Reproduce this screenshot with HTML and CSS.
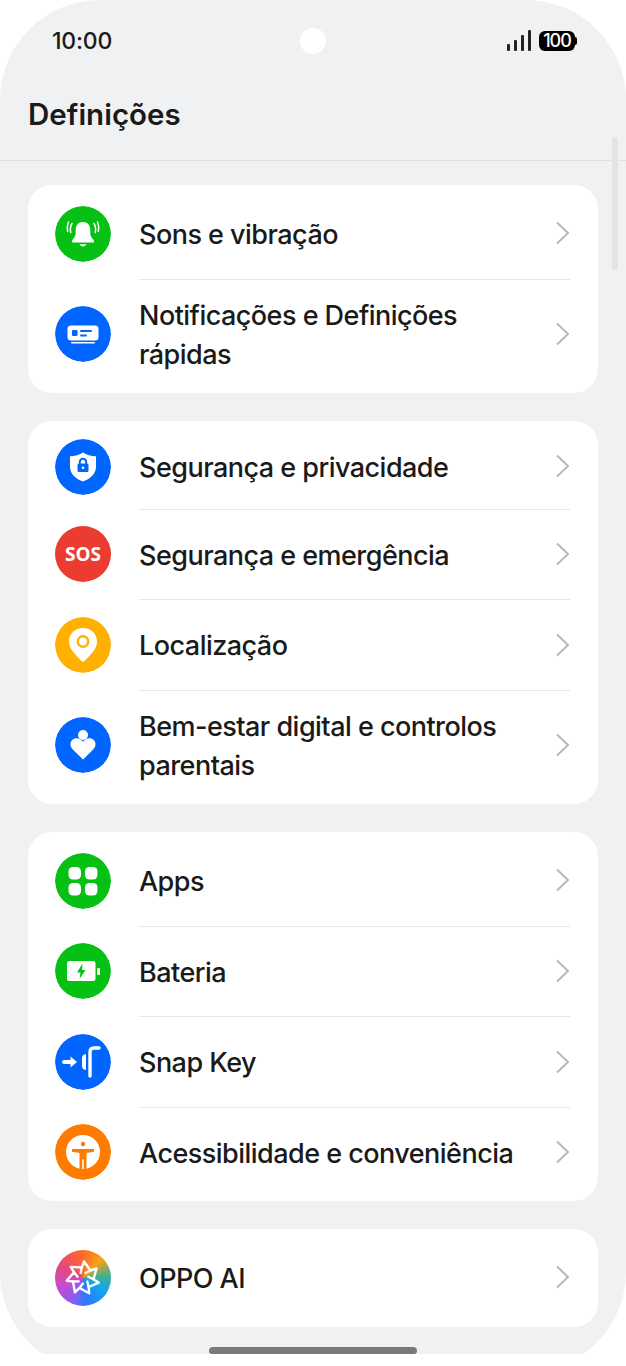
FILE: index.html
```html
<!DOCTYPE html>
<html lang="pt">
<head>
    <title>Definições</title>
    <link rel="stylesheet" href="styles.css">
</head>
<body>
    <div class="viewport">
        <div class="screen">
            <div class="status-bar">
                <span class="clock">10:00</span>
                <span class="camera"></span>
                <div class="status-icons">
                    <svg class="signal" width="24" height="22" viewBox="0 0 24 22">
                        <rect x="0" y="14" width="3" height="7" rx="1"/>
                        <rect x="7" y="10" width="3" height="11" rx="1"/>
                        <rect x="14" y="5" width="3" height="16" rx="1"/>
                        <rect x="21" y="0" width="3" height="21" rx="1"/>
                    </svg>
                    <div class="battery"><span class="battery-level">100</span></div>
                </div>
            </div>

            <div class="title-bar">
                <h1>Definições</h1>
            </div>

            <div class="scroll-thumb"></div>

            <div class="content">
                <div class="card">
                    <div class="row">
                        <svg class="icon" viewBox="0 0 56 56">
                            <circle cx="28" cy="28" r="28" fill="#07c014"/>
                            <path d="M28 16c-4.700 0-7.300 3.500-7.300 8v3.500c0 2.500-1.300 4.300-3.500 6.500v2.500h21.600V34c-2.200-2.200-3.500-4-3.500-6.500V24c0-4.500-2.600-8-7.300-8z" fill="#fff"/>
                            <path d="M24.500 38.300h7c-.8 1.500-2 2.100-3.500 2.100s-2.700-.6-3.500-2.100z" fill="#fff"/>
                            <path d="M17 17.500c-1.500 2.500-2 6-1.200 9M13.500 16c-1.300 3-1.600 6.500-.8 9.500M39 17.500c1.500 2.500 2 6 1.200 9M42.500 16c1.300 3 1.600 6.500.8 9.500" fill="none" stroke="#fff" stroke-width="1.500" stroke-linecap="round"/>
                        </svg>
                        <div class="row-body">
                            <span class="label">Sons e vibração</span>
                            <svg class="chevron" viewBox="0 0 15 24"><path d="M2 1.500 13 12 2 22.500"/></svg>
                        </div>
                    </div>
                    <div class="row row-tall">
                        <svg class="icon" viewBox="0 0 56 56">
                            <circle cx="28" cy="28" r="28" fill="#0066ff"/>
                            <rect x="12.500" y="19.500" width="31" height="15" rx="3.500" fill="#fff"/>
                            <rect x="17" y="24" width="5.500" height="6" rx="1" fill="#0066ff"/>
                            <rect x="25" y="24" width="12" height="2" rx="1" fill="#0066ff"/>
                            <rect x="25" y="28.500" width="7" height="2" rx="1" fill="#0066ff"/>
                            <rect x="16" y="36" width="24" height="1.600" rx=".8" fill="#fff"/>
                        </svg>
                        <div class="row-body">
                            <span class="label">Notificações e Definições rápidas</span>
                            <svg class="chevron" viewBox="0 0 15 24"><path d="M2 1.500 13 12 2 22.500"/></svg>
                        </div>
                    </div>
                </div>

                <div class="card">
                    <div class="row row-short">
                        <svg class="icon" viewBox="0 0 56 56">
                            <circle cx="28" cy="28" r="28" fill="#0066ff"/>
                            <path d="M28 13.500c3.500 2.300 8 3.500 13 3.800v10.200c0 7-5 12.200-13 15-8-2.800-13-8-13-15V17.300c5-.3 9.500-1.500 13-3.800z" fill="#fff"/>
                            <path d="M24.800 25v-2a3.200 3.200 0 0 1 6.400 0v2" fill="none" stroke="#0066ff" stroke-width="2"/>
                            <rect x="22.500" y="24.500" width="11" height="8.500" rx="1.500" fill="#0066ff"/>
                            <circle cx="28" cy="28.700" r="1.300" fill="#fff"/>
                        </svg>
                        <div class="row-body">
                            <span class="label">Segurança e privacidade</span>
                            <svg class="chevron" viewBox="0 0 15 24"><path d="M2 1.500 13 12 2 22.500"/></svg>
                        </div>
                    </div>
                    <div class="row">
                        <div class="icon icon-sos">SOS</div>
                        <div class="row-body">
                            <span class="label">Segurança e emergência</span>
                            <svg class="chevron" viewBox="0 0 15 24"><path d="M2 1.500 13 12 2 22.500"/></svg>
                        </div>
                    </div>
                    <div class="row">
                        <svg class="icon" viewBox="0 0 56 56">
                            <circle cx="28" cy="28" r="28" fill="#ffb000"/>
                            <path d="M28 11c-8 0-14 5.800-14 13.500 0 7 5.500 12.500 12.500 19.500.9.900 2.100.9 3 0C36.500 37 42 31.500 42 24.500 42 16.800 36 11 28 11z" fill="#fff"/>
                            <circle cx="28" cy="24.500" r="5.200" fill="none" stroke="#ffb000" stroke-width="2.400"/>
                        </svg>
                        <div class="row-body">
                            <span class="label">Localização</span>
                            <svg class="chevron" viewBox="0 0 15 24"><path d="M2 1.500 13 12 2 22.500"/></svg>
                        </div>
                    </div>
                    <div class="row row-tall">
                        <svg class="icon" viewBox="0 0 56 56">
                            <circle cx="28" cy="28" r="28" fill="#0066ff"/>
                            <circle cx="28" cy="18" r="5" fill="#fff"/>
                            <path d="M28 42.500 18.300 33c-2-2-2.800-3.700-2.800-5.700 0-3.500 2.700-6 6-6 2.700 0 4.800 1.300 6.500 3.500 1.700-2.200 3.800-3.500 6.500-3.500 3.300 0 6 2.500 6 6 0 2-.8 3.700-2.800 5.700z" fill="#fff"/>
                        </svg>
                        <div class="row-body">
                            <span class="label">Bem-estar digital e controlos parentais</span>
                            <svg class="chevron" viewBox="0 0 15 24"><path d="M2 1.500 13 12 2 22.500"/></svg>
                        </div>
                    </div>
                </div>

                <div class="card">
                    <div class="row">
                        <svg class="icon" viewBox="0 0 56 56">
                            <circle cx="28" cy="28" r="28" fill="#07c014"/>
                            <rect x="13.500" y="14" width="12.500" height="12.500" rx="4.500" fill="#fff"/>
                            <rect x="30" y="14" width="12.500" height="12.500" rx="4.500" fill="#fff"/>
                            <rect x="13.500" y="30" width="12.500" height="12.500" rx="4.500" fill="#fff"/>
                            <rect x="30" y="30" width="12.500" height="12.500" rx="4.500" fill="#fff"/>
                        </svg>
                        <div class="row-body">
                            <span class="label">Apps</span>
                            <svg class="chevron" viewBox="0 0 15 24"><path d="M2 1.500 13 12 2 22.500"/></svg>
                        </div>
                    </div>
                    <div class="row">
                        <svg class="icon" viewBox="0 0 56 56">
                            <circle cx="28" cy="28" r="28" fill="#07c014"/>
                            <rect x="12" y="18" width="28.500" height="20" rx="2.500" fill="#fff"/>
                            <rect x="42" y="25" width="3" height="7" rx="1" fill="#fff"/>
                            <path d="M27.500 20.500 22 29.500h3.500L24.500 36 30.500 27H27z" fill="#07c014"/>
                        </svg>
                        <div class="row-body">
                            <span class="label">Bateria</span>
                            <svg class="chevron" viewBox="0 0 15 24"><path d="M2 1.500 13 12 2 22.500"/></svg>
                        </div>
                    </div>
                    <div class="row">
                        <svg class="icon" viewBox="0 0 56 56">
                            <circle cx="28" cy="28" r="28" fill="#0066ff"/>
                            <path d="M9 28h8" stroke="#fff" stroke-width="4" stroke-linecap="round"/>
                            <path d="M15.500 22.500 22 28l-6.500 5.500z" fill="#fff"/>
                            <path d="M31 20v16c-2.600-.3-4-1.800-4-4v-8c0-2.200 1.400-3.700 4-4z" fill="#fff"/>
                            <path d="M35 42V18.500c0-2.600 1.300-4.500 4-4.500h5" fill="none" stroke="#fff" stroke-width="3.400" stroke-linecap="round" stroke-linejoin="round"/>
                        </svg>
                        <div class="row-body">
                            <span class="label">Snap Key</span>
                            <svg class="chevron" viewBox="0 0 15 24"><path d="M2 1.500 13 12 2 22.500"/></svg>
                        </div>
                    </div>
                    <div class="row">
                        <svg class="icon" viewBox="0 0 56 56">
                            <circle cx="28" cy="28" r="28" fill="#ff7b00"/>
                            <circle cx="28" cy="28" r="17" fill="#fff"/>
                            <circle cx="28" cy="20" r="2.200" fill="#ff7b00"/>
                            <path d="M17 25h22v2.700l-7.500 1.300V46h-2.700V35.500h-1.600V46h-2.700V29L17 27.700z" fill="#ff7b00"/>
                        </svg>
                        <div class="row-body">
                            <span class="label">Acessibilidade e conveniência</span>
                            <svg class="chevron" viewBox="0 0 15 24"><path d="M2 1.500 13 12 2 22.500"/></svg>
                        </div>
                    </div>
                </div>

                <div class="card">
                    <div class="row">
                        <div class="icon icon-ai">
                            <svg viewBox="0 0 56 56">
                                <g fill="none" stroke="#fff" stroke-width="2.400" stroke-linejoin="round" stroke-linecap="round">
                                    <path d="M26.800 17.500 29 11.500 35.500 20.500 30.500 23"/>
                                    <path d="M26.800 17.500 29 11.500 35.500 20.500 30.500 23" transform="rotate(51.400 28 28)"/>
                                    <path d="M26.800 17.500 29 11.500 35.500 20.500 30.500 23" transform="rotate(102.900 28 28)"/>
                                    <path d="M26.800 17.500 29 11.500 35.500 20.500 30.500 23" transform="rotate(154.300 28 28)"/>
                                    <path d="M26.800 17.500 29 11.500 35.500 20.500 30.500 23" transform="rotate(205.700 28 28)"/>
                                    <path d="M26.800 17.500 29 11.500 35.500 20.500 30.500 23" transform="rotate(257.100 28 28)"/>
                                    <path d="M26.800 17.500 29 11.500 35.500 20.500 30.500 23" transform="rotate(308.600 28 28)"/>
                                </g>
                            </svg>
                        </div>
                        <div class="row-body">
                            <span class="label">OPPO AI</span>
                            <svg class="chevron" viewBox="0 0 15 24"><path d="M2 1.500 13 12 2 22.500"/></svg>
                        </div>
                    </div>
                </div>
            </div>

            <div class="home-indicator"></div>
        </div>
    </div>
</body>
</html>
```

FILE: styles.css
```css
* {
    box-sizing: border-box;
}
html, body {
    margin: 0;
    background: #fff;
}
body {
    font-family: Inter, "Noto Sans", sans-serif;
    color: #1a1a1a;
}
.viewport {
    height: 1354px;
    overflow: hidden;
    position: relative;
}
.screen {
    height: 1372px;
    background: #f0f1f3;
    border-radius: 100px;
    overflow: hidden;
}
.status-bar {
    height: 81px;
    display: grid;
    grid-template-columns: 1fr auto 1fr;
    align-items: center;
    padding: 0 50px;
}
.clock {
    margin-left: 2px;
    font-size: 23px;
    font-weight: 500;
    letter-spacing: -0.2px;
}
.camera {
    width: 26px;
    height: 26px;
    border-radius: 50%;
    background: #fff;
}
.status-icons {
    margin-right: -1px;
    display: flex;
    align-items: center;
    justify-content: flex-end;
    gap: 8px;
}
.signal {
    fill: #222;
}
.battery {
    position: relative;
    width: 36px;
    height: 20px;
    margin-right: 2px;
    background: #000;
    border-radius: 6px;
    display: flex;
    align-items: center;
    justify-content: center;
}
.battery::after {
    content: "";
    position: absolute;
    right: -2px;
    top: 6px;
    width: 2px;
    height: 8px;
    border-radius: 0 2px 2px 0;
    background: #000;
}
.battery-level {
    color: #fff;
    font-size: 18px;
    font-weight: 500;
    letter-spacing: -1px;
}
.title-bar {
    height: 80px;
    padding: 0 28px 14px;
    border-bottom: 1px solid #dfe0e2;
    display: flex;
    align-items: center;
}
.title-bar h1 {
    margin: 0;
    font-size: 29.5px;
    font-weight: 600;
}
.scroll-thumb {
    position: absolute;
    top: 137px;
    right: 8px;
    width: 6px;
    height: 133px;
    border-radius: 3px;
    background: #e3e4e6;
}
.content {
    padding: 24px 28px 0;
    display: flex;
    flex-direction: column;
    gap: 28px;
}
.card {
    background: #fff;
    border-radius: 24px;
    padding: 3px 28px 4px 27px;
}
.row {
    display: flex;
    align-items: center;
    gap: 28px;
    height: 90.5px;
}
.row-tall {
    height: 110.5px;
}
.row-short {
    height: 84.5px;
}
.icon {
    width: 56px;
    height: 56px;
    margin-top: 1px;
    flex-shrink: 0;
    border-radius: 50%;
}
.icon-sos {
    background: #ec3c32;
    color: #fff;
    font-family: "Open Sans", sans-serif;
    font-size: 19px;
    font-weight: 700;
    display: flex;
    align-items: center;
    justify-content: center;
}
.icon-ai {
    background: conic-gradient(from 0deg, #ff6a2a, #f7a21a 45deg, #3fb08e 85deg, #14a5f0 120deg, #2a7bfb 170deg, #8a5cf0 205deg, #c64bd0 250deg, #e8477a 300deg, #ff6a2a);
}
.icon-ai svg {
    display: block;
}
.row-body {
    flex: 1;
    min-width: 0;
    height: 100%;
    display: flex;
    align-items: center;
    justify-content: space-between;
    gap: 24px;
    border-top: 1px solid #e6e6e6;
}
.row:first-child .row-body {
    border-top: none;
}
.label {
    padding-top: 2px;
    font-size: 27px;
    line-height: 39px;
    font-weight: 450;
    letter-spacing: -0.53px;
}
.chevron {
    width: 15px;
    height: 24px;
    flex-shrink: 0;
    fill: none;
    stroke: #b8b8b8;
    stroke-width: 2;
}
.home-indicator {
    position: absolute;
    left: 209px;
    top: 1347px;
    width: 208px;
    height: 7px;
    border-radius: 4px 4px 3px 3px;
    background: #7a7a7a;
}
```
